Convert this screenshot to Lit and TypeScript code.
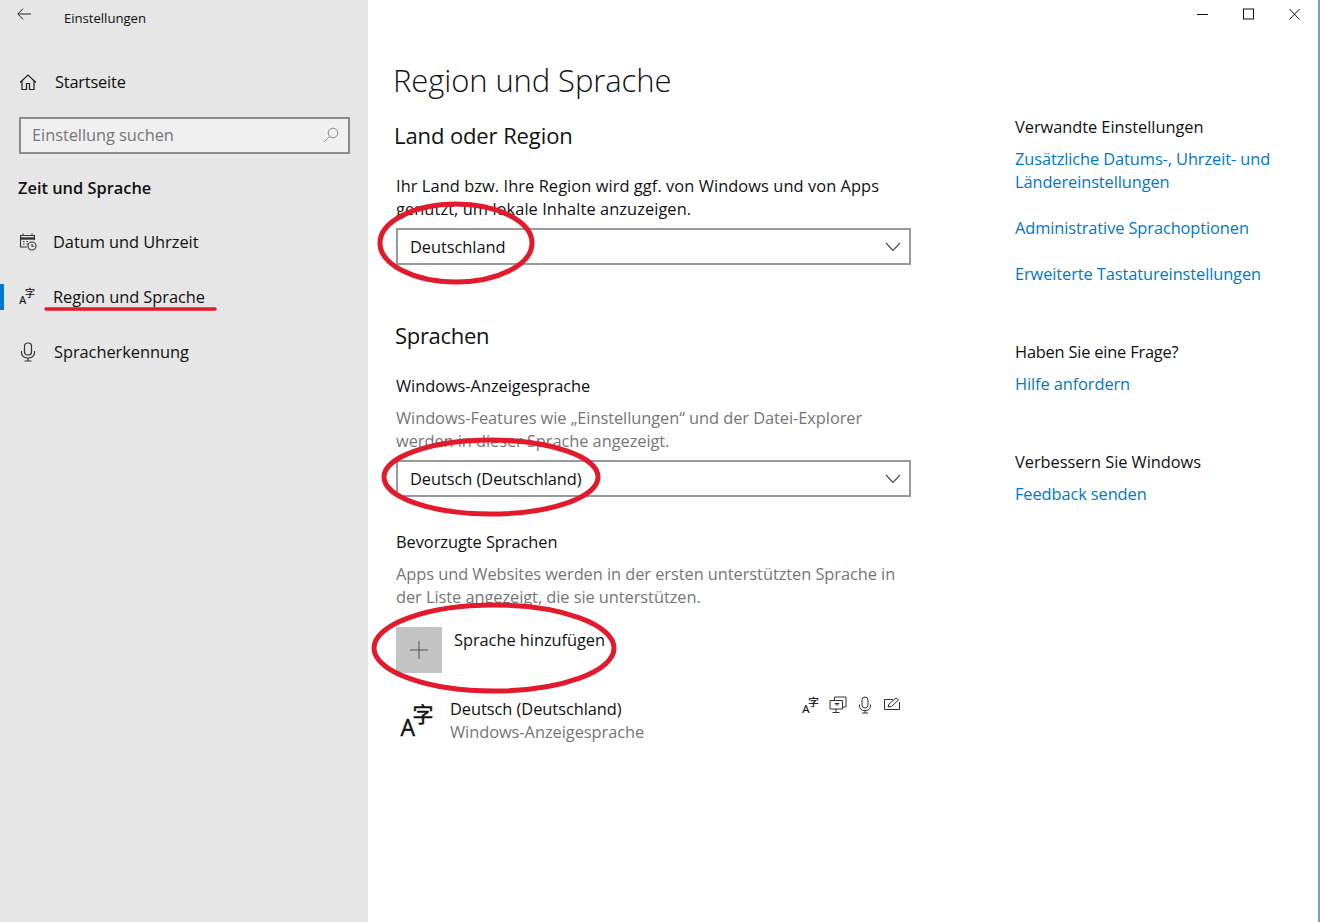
import { LitElement, html, css } from "lit";
import { customElement } from "lit/decorators.js";

const langIcon = (size: number) => html`<svg class="glyph" width=${size} height=${size} viewBox="0 0 34 34" aria-hidden="true">
  <text x="0.500" y="32" font-size="23" font-family="'Open Sans',sans-serif" fill="#111" stroke="#111" stroke-width="0.4">A</text>
  <text x="12.500" y="17.500" font-size="21" font-family="'Noto Sans CJK SC',sans-serif" fill="#111" stroke="#111" stroke-width="0.5">字</text>
</svg>`;

@customElement("app-root")
export class AppRoot extends LitElement {
  static styles = css`
    :host { display: block; width: 1320px; height: 922px; overflow: hidden; position: relative; background: #fff;
      font-family: "Open Sans", "Noto Sans", sans-serif; font-size: 16.4px; color: #111; letter-spacing: -0.05px; }
    .window { display: grid; grid-template-columns: 368px 1fr; height: 922px; border-right: 2px solid #6fa3cc; box-sizing: border-box; }
    svg { display: block; flex: none; overflow: visible; }
    .side { background: #e6e6e6; display: flex; flex-direction: column; }
    .head { display: flex; height: 36px; align-items: center; padding-left: 17px; }
    .head svg { margin-top: -9px; }
    .head span { font-size: 13.2px; margin-left: 33px; }
    .nav { display: flex; align-items: center; height: 24px; padding-left: 19px; }
    .nav svg { width: 18px; height: 20px; }
    .nav svg.glyph { width: 16px; height: 16px; margin-right: 2px; }
    .nav span { margin-left: 16px; line-height: 24px; }
    .home { margin-top: 34px; }
    .home span { margin-left: 18px; letter-spacing: -0.2px; }
    .search { margin: 23px 18px 0 19px; height: 37px; box-sizing: border-box; border: 2px solid #8b8b8b; background: #f0f0f0;
      display: flex; align-items: center; justify-content: space-between; padding: 0 9px 2px 11px; color: #767676; }
    .group { margin: 22px 0 0 18px; font-weight: 600; line-height: 24px; letter-spacing: 0; }
    .date { margin-top: 30px; }
    .active { margin-top: 31px; position: relative; }
    .active::before { content: ""; position: absolute; left: 0; top: -1px; width: 4px; height: 26px; background: #0078d7; }
    .speech { margin-top: 31px; }
    .speech span { margin-left: 17px; }
    .main { display: grid; grid-template-columns: 647px 1fr; position: relative; }
    .controls { position: absolute; right: 18px; top: 8px; display: flex; gap: 35px; }
    .content { padding: 59px 0 0 26px; display: flex; flex-direction: column; }
    h1 { margin: 0 0 0 -1px; font-weight: 300; font-size: 31px; line-height: 42px; letter-spacing: -0.1px; }
    h2 { margin: 0; font-weight: 400; font-size: 22px; line-height: 30px; letter-spacing: -0.1px; }
    h2.land { margin-top: 19px; }
    h2.lang { margin: 55px 0 0 1px; letter-spacing: -0.3px; }
    p { margin: 0 0 0 2px; line-height: 23px; width: 510px; letter-spacing: 0.07px; }
    p.muted { letter-spacing: -0.06px; }
    .intro { margin-top: 24px; }
    .muted { color: #767676; }
    .sel { margin: 8px 0 0 2px; width: 515px; height: 37px; box-sizing: border-box; border: 2px solid #999; display: flex;
      align-items: center; justify-content: space-between; padding: 0 8px 0 12px; }
    .label { margin: 24px 0 0 2px; line-height: 23px; }
    .label.two { margin-top: 33px; }
    .label + .muted { margin-top: 9px; }
    .add { display: flex; margin: 19px 0 0 2px; }
    .plus { width: 46px; height: 46px; background: #c4c4c4; display: flex; align-items: center; justify-content: center; }
    .add span { margin: 1px 0 0 12px; line-height: 24px; }
    .lang-row { display: flex; width: 501px; margin: 31px 0 0 6px; }
    .lang-row .names { margin-left: 16px; line-height: 23px; margin-top: -7px; flex: 1; }
    .tools { display: flex; gap: 10px; margin-top: -11px; align-items: center; height: 24px; }
    .aside { padding-top: 115px; display: flex; flex-direction: column; }
    .aside .t { line-height: 24px; }
    .aside a { display: block; color: #0078c8; line-height: 23px; text-decoration: none; letter-spacing: -0.1px; }
    .gap1 { margin-top: 8px; }
    .gap2 { margin-top: 23px; }
    .t2 { margin-top: 55px; letter-spacing: -0.2px; }
    .t3 { margin-top: 55px; }
    .overlay { position: absolute; inset: 0; pointer-events: none; }
  `;

  render() {
    return html`
      <div class="window">
        <aside class="side">
          <div class="head">
            <svg width="14" height="12" viewBox="0 0 14 12" fill="none" stroke="#222" stroke-width="1"><path d="M14 6H1M6 .7 .8 6 6 11.3"/></svg>
            <span>Einstellungen</span>
          </div>
          <div class="nav home">
            <svg viewBox="0 0 18 20" fill="none" stroke="#222" stroke-width="1.2"><path d="M1 10.500 9 3l8 7.500M3 9v8.500h4.500v-6h3v6H15V9"/></svg>
            <span>Startseite</span>
          </div>
          <div class="search">
            <span>Einstellung suchen</span>
            <svg width="16" height="16" viewBox="0 0 16 16" fill="none" stroke="#888" stroke-width="1"><circle cx="10" cy="6" r="4.800"/><path d="M6.500 9.500 1 15"/></svg>
          </div>
          <div class="group">Zeit und Sprache</div>
          <div class="nav date">
            <svg viewBox="0 0 18 20" fill="none" stroke="#333" stroke-width="1.1"><path d="M8 15H1.500V3.500h14V8"/><path d="M1.500 6.500h14" stroke-width="2.400"/><path d="M4 1.500v2M13 1.500v2M4 9.500h1.500M7.500 9.500H9M4 12h1.500M7.500 12H9"/><circle cx="13" cy="14" r="4" fill="#e6e6e6"/><path d="M13 12v2.200h2"/></svg>
            <span>Datum und Uhrzeit</span>
          </div>
          <div class="nav active">
            ${langIcon(16)}
            <span>Region und Sprache</span>
          </div>
          <div class="nav speech">
            <svg viewBox="0 0 18 20" fill="none" stroke="#333" stroke-width="1.2"><rect x="5.500" y="1" width="7" height="12" rx="3"/><path d="M2.500 9v1.500A5.500 5.500 0 0 0 8 16h2a5.500 5.500 0 0 0 5.500-5.500V9M9 16v3M5.500 19h7"/></svg>
            <span>Spracherkennung</span>
          </div>
        </aside>
        <main class="main">
          <div class="controls">
            <svg width="11" height="12" viewBox="0 0 11 12" stroke="#111" fill="none"><path d="M0 6.500h11"/></svg>
            <svg width="11" height="12" viewBox="0 0 11 12" stroke="#111" fill="none"><rect x=".5" y="1" width="10" height="10"/></svg>
            <svg width="11" height="12" viewBox="0 0 11 12" stroke="#111" fill="none"><path d="M.5 1l10 10.500M10.500 1l-10 10.500"/></svg>
          </div>
          <section class="content">
            <h1>Region und Sprache</h1>
            <h2 class="land">Land oder Region</h2>
            <p class="intro">Ihr Land bzw. Ihre Region wird ggf. von Windows und von Apps genutzt, um lokale Inhalte anzuzeigen.</p>
            <div class="sel"><span>Deutschland</span>${this.chev()}</div>
            <h2 class="lang">Sprachen</h2>
            <div class="label">Windows-Anzeigesprache</div>
            <p class="muted">Windows-Features wie „Einstellungen“ und der Datei-Explorer werden in dieser Sprache angezeigt.</p>
            <div class="sel"><span>Deutsch (Deutschland)</span>${this.chev()}</div>
            <div class="label two">Bevorzugte Sprachen</div>
            <p class="muted">Apps und Websites werden in der ersten unterstützten Sprache in der Liste angezeigt, die sie unterstützen.</p>
            <div class="add">
              <div class="plus"><svg width="18" height="18" viewBox="0 0 18 18" stroke="#555"><path d="M9 0v18M0 9h18"/></svg></div>
              <span>Sprache hinzufügen</span>
            </div>
            <div class="lang-row">
              ${langIcon(34)}
              <div class="names"><div>Deutsch (Deutschland)</div><div class="muted">Windows-Anzeigesprache</div></div>
              <div class="tools">
                ${langIcon(17)}
                <svg width="18" height="18" viewBox="0 0 18 18" fill="none" stroke="#333"><path d="M5.500 4V1H17v10h-3M1 4.500h12.500V13H1zM7 13v3.500M3.500 16.500h7M6 7.500h4l-2 2z"/></svg>
                <svg width="16" height="18" viewBox="0 0 16 18" fill="none" stroke="#333"><rect x="5" y="1" width="6" height="11" rx="3"/><path d="M2.500 8.500V10A4.500 4.500 0 0 0 7 14.500h2A4.500 4.500 0 0 0 13.500 10V8.500M8 14.500V17M5 17h6"/></svg>
                <svg width="18" height="18" viewBox="0 0 18 18" fill="none" stroke="#333"><path d="M10 3.500H1.500v10H16.500V6M5 11l1-3 7-6 2.500 2-7 6.500z"/></svg>
              </div>
            </div>
          </section>
          <section class="aside">
            <div class="t">Verwandte Einstellungen</div>
            <a class="gap1" href="#">Zusätzliche Datums-, Uhrzeit- und Ländereinstellungen</a>
            <a class="gap2" href="#">Administrative Sprachoptionen</a>
            <a class="gap2" href="#">Erweiterte Tastatureinstellungen</a>
            <div class="t t2">Haben Sie eine Frage?</div>
            <a class="gap1" href="#">Hilfe anfordern</a>
            <div class="t t3">Verbessern Sie Windows</div>
            <a class="gap1" href="#">Feedback senden</a>
          </section>
        </main>
      </div>
      <svg class="overlay" width="1320" height="922" viewBox="0 0 1320 922" fill="none" stroke="#e21a2c" stroke-width="5" stroke-linecap="round">
        <ellipse cx="456" cy="243" rx="76" ry="39"/>
        <ellipse cx="491" cy="477" rx="107" ry="37"/>
        <ellipse cx="494" cy="648" rx="120" ry="43"/>
        <path d="M46 309H215" stroke-width="3.500"/>
      </svg>
    `;
  }

  chev() {
    return html`<svg width="16" height="10" viewBox="0 0 16 10" fill="none" stroke="#444" stroke-width="1.1"><path d="M1 1l7 7.500L15 1"/></svg>`;
  }
}
